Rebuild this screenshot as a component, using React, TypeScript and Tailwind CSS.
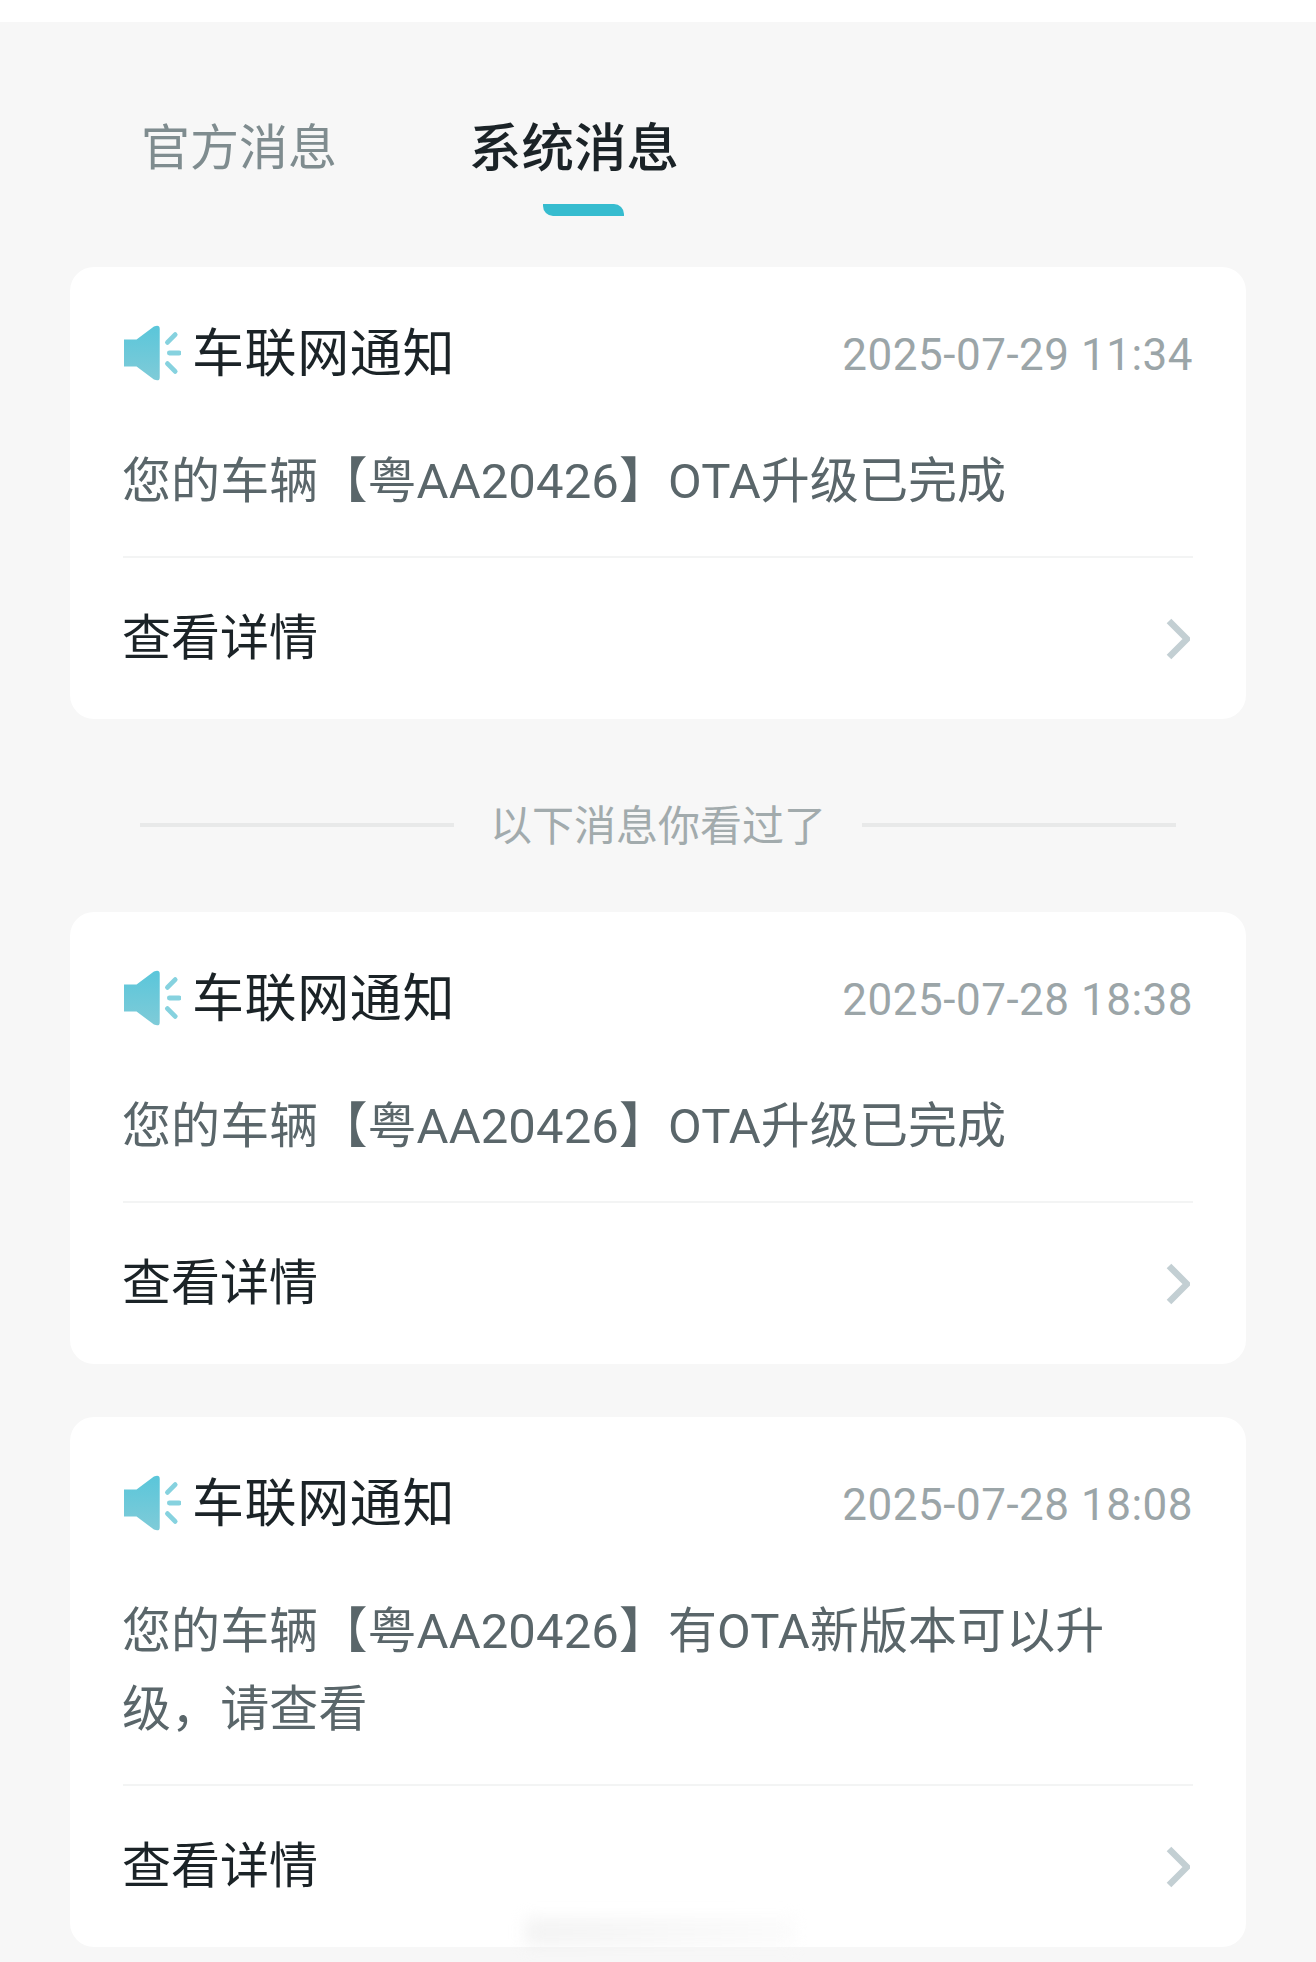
const font = { fontFamily: 'Roboto, "Noto Sans CJK SC", sans-serif' };

function SpeakerIcon() {
  return (
    <svg width="58" height="56" viewBox="0 0 60 58" className="shrink-0 mb-[3px]">
      <defs>
        <linearGradient id="spk" x1="0" y1="0" x2="0" y2="1">
          <stop offset="0" stopColor="#5ac6da" />
          <stop offset="1" stopColor="#7fcbd8" />
        </linearGradient>
      </defs>
      <path
        d="M1 15 H14 L32 1.5 Q38 -1 38 4 V54 Q38 59 32 56.5 L14 43 H1 Z"
        fill="url(#spk)"
      />
      <g stroke="#86d2df" strokeWidth="5" strokeLinecap="round" fill="none">
        <path d="M46 18 L54 10" />
        <path d="M48 29 H58" />
        <path d="M46 40 L54 48" />
      </g>
    </svg>
  );
}

function Chevron() {
  return (
    <svg width="24" height="42" viewBox="0 0 24 42" className="shrink-0 mr-[3px]">
      <path d="M3 3 L21 21 L3 39" fill="none" stroke="#c3cfd3" strokeWidth="6.5" />
    </svg>
  );
}

function MessageCard({ time, lines }: { time: string; lines: string[] }) {
  return (
    <div className="bg-white rounded-[24px] px-[53px] pt-[57px]">
      <div className="flex items-center justify-between h-[60px]">
        <div className="flex items-center gap-[11px]">
          <SpeakerIcon />
          <span className="pt-[2px] text-[52px] leading-[60px] tracking-[0.6px] text-[#1b2327]">车联网通知</span>
        </div>
        <span className="pt-[2px] text-[44px] leading-[60px] tracking-[0.5px] text-[#9ba5a8]">{time}</span>
      </div>
      <div className="-ml-[1px] mt-[59px] mb-[35px] text-[49px] leading-[78px] tracking-[0.1px] text-[#5a666a]">
        {lines.map((line) => (
          <p key={line}>{line}</p>
        ))}
      </div>
      <div className="h-[2px] bg-[#f3f4f4]" />
      <div className="flex items-center justify-between h-[161px]">
        <span className="-ml-[1px] text-[49px] text-[#1b2327]">查看详情</span>
        <Chevron />
      </div>
    </div>
  );
}

export default function App() {
  return (
    <div className="relative w-[1316px] h-[1962px] overflow-hidden bg-white" style={font}>
      <div className="absolute inset-x-0 top-[22px] h-[1940px] bg-[#f7f7f7] px-[70px]">
        <div className="flex h-[245px] pl-[71px] pt-[92px] gap-[132px]">
          <span className="text-[49px] leading-[70px] text-[#7f8c8f]">官方消息</span>
          <div className="relative">
            <span className="text-[52.5px] leading-[70px] font-medium text-[#1b2327]">系统消息</span>
            <div className="absolute left-[74px] top-[90px] w-[81px] h-[12px] bg-[#36bccf] rounded-tr-[10px] rounded-bl-[10px]" />
          </div>
        </div>
        <MessageCard time="2025-07-29 11:34" lines={["您的车辆【粤AA20426】OTA升级已完成"]} />
        <div className="flex items-center justify-center h-[193px] pt-[18px] px-[70px] gap-[36px]">
          <div className="h-[4px] flex-1 bg-[#e8e9e9]" />
          <span className="pt-[3px] text-[42px] text-[#a2abad]">以下消息你看过了</span>
          <div className="h-[4px] flex-1 bg-[#e8e9e9]" />
        </div>
        <MessageCard time="2025-07-28 18:38" lines={["您的车辆【粤AA20426】OTA升级已完成"]} />
        <div className="h-[53px]" />
        <MessageCard
          time="2025-07-28 18:08"
          lines={["您的车辆【粤AA20426】有OTA新版本可以升", "级，请查看"]}
        />
      </div>
      <div className="absolute left-[525px] top-[1918px] w-[270px] h-[28px] bg-gradient-to-r from-[#e2e2e2] to-[#f6f6f6] opacity-40 blur-[8px]" />
    </div>
  );
}
